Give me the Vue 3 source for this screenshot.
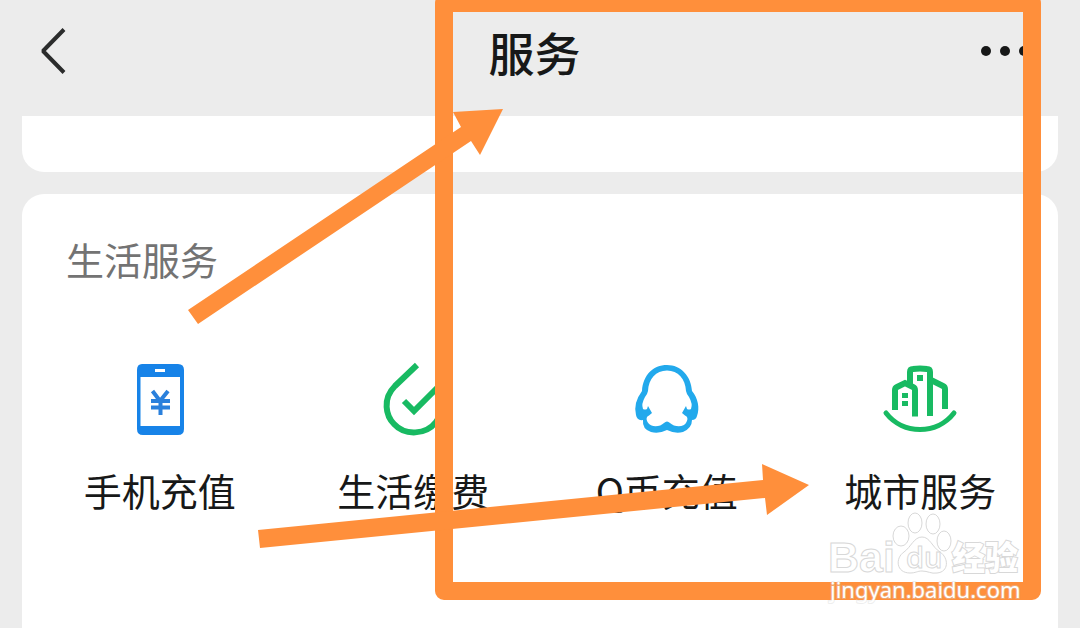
<script setup>
const services = [
  { id: 'phone', name: '手机充值' },
  { id: 'bills', name: '生活缴费' },
  { id: 'qcoin', name: 'Q币充值' },
  { id: 'city', name: '城市服务' },
]
</script>

<template>
  <div class="page">
    <header class="bar">
      <button class="bar-button back" type="button" aria-label="返回">
        <svg width="28" height="48" viewBox="0 0 28 48" fill="none" stroke="#2b2c2c" stroke-width="4">
          <path d="M24 2.500 3 24 24 45.500" stroke-linejoin="bevel" />
        </svg>
      </button>
      <h1 class="title">服务</h1>
      <button class="bar-button more" type="button" aria-label="更多">
        <svg width="48" height="10" viewBox="0 0 48 10" fill="#171818">
          <circle cx="5" cy="5" r="5" />
          <circle cx="24" cy="5" r="5" />
          <circle cx="43" cy="5" r="5" />
        </svg>
      </button>
    </header>

    <main class="content">
      <div class="card previous"></div>
      <section class="card current">
        <h2 class="heading">生活服务</h2>
        <nav class="services">
          <a v-for="item in services" :key="item.id" class="service" href="#">
            <svg v-if="item.id === 'phone'" class="icon" viewBox="0 0 80 80">
              <path
                fill="#1783e8"
                fill-rule="evenodd"
                d="M22 4h36q6 0 6 6v59q0 6-6 6H23q-6 0-6-6V10q0-6 5-6ZM20.500 17v49H60V17ZM35 9v3h10V9Z"
              />
              <path fill="none" stroke="#2a80dc" stroke-width="4" d="M32.500 31l7.500 10 8-10M31 41h19M31 47.500h19M40.500 40v15" />
            </svg>
            <svg v-else-if="item.id === 'bills'" class="icon" viewBox="0 0 80 80">
              <g fill="none" stroke="#18ba62" stroke-width="6">
                <path d="M44 5 22 26C9 39 13 56 21 64C32 76 53 75 63 62C70 53 69 40 64 33" />
                <path d="M31 41l10 10 27-27" />
              </g>
            </svg>
            <svg v-else-if="item.id === 'qcoin'" class="icon" viewBox="0 0 80 80">
              <path
                fill="#22a9ec"
                fill-rule="evenodd"
                d="M40 5C54 5 64 16 65 31C71 38 73 48 70 56Q69 60 65 60Q65 68 56 72Q48 74 40 70Q32 74 24 72Q15 69 16 60Q10 61 9 55Q6 43 15 31C16 15 26 5 40 5ZM40 10.500C29 10.500 21.500 19 21 31Q20.500 34 18 37Q14 44 16 49Q18 50 20 49L21 46L25 53L22 55.500Q18 57 20.500 62C24 68 33 67 37 63Q40 60 43 63C47 67 57 68 59.500 62Q62 57 58 55.500L55 53L59 46L60 49Q62 50 64 49Q66 44 62 37Q59.500 34 59 31C58.500 19 51 10.500 40 10.500Z"
              />
            </svg>
            <svg v-else class="icon" viewBox="0 0 80 80">
              <g fill="none" stroke="#18ba62" stroke-width="6">
                <path d="M15 50V30Q15 28 17 27L25 23L33 27Q35 28 35 30V56.500M30 24V12Q30 9 33 9Q40 8 47 9Q50 9 50 12V56M51 20L63 26Q65 27 65 29V49" />
                <path stroke-width="5" stroke-linecap="round" d="M6 53C23 75 57 75 74 53" />
              </g>
              <path fill="#18ba62" d="M37 15h6v6h-6ZM22 33h6v5h-6ZM22 41h6v5h-6Z" />
            </svg>
            <span>{{ item.name }}</span>
          </a>
        </nav>
      </section>
    </main>

    <svg class="marks" viewBox="0 0 1080 628" preserveAspectRatio="xMinYMin meet" aria-hidden="true">
      <rect x="444" y="3" width="588" height="588" fill="none" stroke="#ff8f3b" stroke-width="18" stroke-linejoin="round" />
      <g fill="#ff8f3b">
        <path d="M188 310 461 127 453 112 503 109 480 155 471 141 198 324Z" />
        <path d="M258 530 763 480 762 464 809 485 767 515 765 498 260 548Z" />
      </g>
      <g class="watermark">
        <text class="brand" x="828" y="572">Bai</text>
        <path d="M922 537C914 537 911 547 904 552C895 558 896 573 910 573C916 573 917 571 922 571C928 571 931 574 937 573C949 572 949 558 940 552C932 547 930 537 922 537Z" />
        <ellipse cx="901" cy="536" rx="8" ry="10" />
        <ellipse cx="915" cy="523" rx="7" ry="10" />
        <ellipse cx="933" cy="524" rx="7" ry="10" />
        <ellipse cx="944" cy="541" rx="7" ry="10" />
        <text class="du" x="906" y="568">du</text>
        <text class="topic" x="952" y="570">经验</text>
        <text class="site" x="830" y="598">jingyan.baidu.com</text>
      </g>
    </svg>
  </div>
</template>

<style>
body {
  margin: 0;
  background: #ececec;
}
</style>

<style scoped>
.page {
  position: relative;
  display: flex;
  flex-direction: column;
  min-height: 100vh;
  overflow: hidden;
  background: #ececec;
  color: #171818;
  font-family: "Noto Sans CJK SC", sans-serif;
}

.bar {
  display: flex;
  align-items: center;
  justify-content: space-between;
  box-sizing: border-box;
  height: 116px;
  padding: 0 51px 14px 40px;
}

.bar-button {
  display: flex;
  width: 48px;
  padding: 0;
  border: 0;
  background: none;
}

.title {
  margin: 0;
  font-size: 46px;
  font-weight: 500;
  line-height: 64px;
}

.content {
  display: flex;
  flex: 1;
  flex-direction: column;
  gap: 22px;
  padding: 0 22px;
}

.card {
  background: #fff;
}

.previous {
  height: 56px;
  border-radius: 0 0 22px 22px;
}

.current {
  flex: 1;
  padding: 37px 11px 0;
  border-radius: 22px 22px 0 0;
}

.heading {
  margin: 0 33px;
  color: #737373;
  font-size: 38px;
  font-weight: 400;
  line-height: 56px;
}

.services {
  display: grid;
  grid-template-columns: repeat(4, 1fr);
  padding-top: 73px;
}

.service {
  display: flex;
  flex-direction: column;
  align-items: center;
  gap: 22px;
  color: inherit;
  font-size: 38px;
  line-height: 56px;
  text-decoration: none;
}

.icon {
  width: 80px;
  height: 80px;
}

.marks {
  position: absolute;
  top: 0;
  left: 0;
  width: 100%;
  pointer-events: none;
}

.watermark {
  fill: #fff;
  stroke: #d8d8d8;
  stroke-width: 1;
}

.brand {
  font: 700 43px "Liberation Sans", sans-serif;
}

.du {
  font: 600 29px "Open Sans", "Liberation Sans", sans-serif;
}

.topic {
  stroke-width: 2;
  paint-order: stroke;
  font: 900 33px "Noto Sans CJK SC", sans-serif;
}

.site {
  stroke: #d4d4d4;
  stroke-width: 2;
  paint-order: stroke;
  stroke-opacity: 0.4;
  font: 400 22px "Noto Sans", sans-serif;
}
</style>
